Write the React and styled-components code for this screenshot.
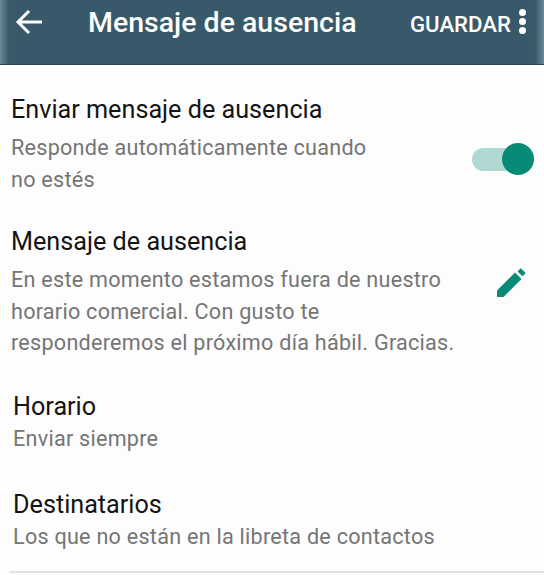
import React from 'react';
import styled, { createGlobalStyle } from 'styled-components';

const GlobalStyle = createGlobalStyle`
  html, body {
    margin: 0;
    padding: 0;
    background: #fff;
  }
  body {
    font-family: Roboto, "Liberation Sans", sans-serif;
  }
`;

const Page = styled.div`
  width: 544px;
  height: 575px;
  overflow: hidden;
  background: #fdfdfd;
  display: flex;
  flex-direction: column;
`;

const Toolbar = styled.div`
  height: 65px;
  flex-shrink: 0;
  box-sizing: border-box;
  background: linear-gradient(90deg, #6b8796 0, #38596a 9px, #38596a 535px, #6b8796 544px);
  border-bottom: 1px solid #2a4452;
  display: flex;
  align-items: flex-start;
  padding: 8px 18px 0 15px;
  color: #fff;
`;

const BackButton = styled.svg`
  width: 28px;
  height: 28px;
  flex-shrink: 0;
`;

const Title = styled.div`
  margin-left: 45px;
  font-size: 28.5px;
  font-weight: 500;
  line-height: 30px;
  flex: 1;
`;

const SaveLabel = styled.div`
  font-size: 22.2px;
  font-weight: 500;
  line-height: 30px;
  margin-top: 1px;
`;

const MoreDots = styled.div`
  display: flex;
  flex-direction: column;
  gap: 2px;
  margin-left: 8px;
  margin-top: 1px;
`;

const Dot = styled.span`
  width: 7px;
  height: 7px;
  border-radius: 50%;
  background: #fff;
`;

const Setting = styled.div`
  display: flex;
  align-items: center;
  justify-content: space-between;
  padding-left: ${(p) => p.$indent || 11}px;
  padding-right: ${(p) => p.$right || 11}px;
  margin-top: ${(p) => p.$top || 0}px;
`;

const SettingText = styled.div`
  display: flex;
  flex-direction: column;
`;

const Heading = styled.div`
  font-size: 25.2px;
  line-height: 30px;
  color: #141414;
`;

const Detail = styled.div`
  font-size: 21.6px;
  line-height: ${(p) => p.$lines || 32}px;
  letter-spacing: 0.25px;
  color: #757575;
  white-space: pre-line;
  margin-top: ${(p) => p.$gap || 1}px;
`;

const Switch = styled.div`
  position: relative;
  width: 62px;
  height: 32px;
  margin-top: 27px;
`;

const SwitchTrack = styled.div`
  position: absolute;
  left: 0;
  top: 5px;
  width: 50px;
  height: 23px;
  border-radius: 12px;
  background: #b0d9d4;
`;

const SwitchKnob = styled.div`
  position: absolute;
  right: 0;
  top: 0;
  width: 32px;
  height: 32px;
  border-radius: 50%;
  background: #078a76;
`;

const EditIcon = styled.svg`
  width: 50px;
  height: 50px;
  flex-shrink: 0;
  margin-bottom: 20px;
`;

const Divider = styled.div`
  height: 2px;
  margin: 18px 0 0 9px;
  background: #e4e4e4;
`;

const App = () => {
  return (
    <Page>
      <GlobalStyle />
      <Toolbar>
        <BackButton viewBox="0 0 28 28" fill="none" stroke="#fff" strokeWidth="3">
          <path d="M27 14H3M14 3L3 14l11 11" />
        </BackButton>
        <Title>Mensaje de ausencia</Title>
        <SaveLabel>GUARDAR</SaveLabel>
        <MoreDots>
          <Dot />
          <Dot />
          <Dot />
        </MoreDots>
      </Toolbar>

      <Setting $top={30} $right={10}>
        <SettingText>
          <Heading>Enviar mensaje de ausencia</Heading>
          <Detail $gap={7}>{'Responde automáticamente cuando\nno estés'}</Detail>
        </SettingText>
        <Switch>
          <SwitchTrack />
          <SwitchKnob />
        </Switch>
      </Setting>

      <Setting $top={31} $right={9}>
        <SettingText>
          <Heading>Mensaje de ausencia</Heading>
          <Detail $gap={7} $lines={31.5}>
            {'En este momento estamos fuera de nuestro\nhorario comercial. Con gusto te\nresponderemos el próximo día hábil. Gracias.'}
          </Detail>
        </SettingText>
        <EditIcon viewBox="0 0 50 50" fill="#078a76">
          <path d="M12 39v-6.5L30 14.5l6.5 6.5L18.5 39z" />
          <path d="M32.5 13.5l3.2-3.2 5 4.7-3 3.3z" />
        </EditIcon>
      </Setting>

      <Setting $top={33} $indent={13}>
        <SettingText>
          <Heading>Horario</Heading>
          <Detail>Enviar siempre</Detail>
        </SettingText>
      </Setting>

      <Setting $top={35} $indent={13}>
        <SettingText>
          <Heading>Destinatarios</Heading>
          <Detail>Los que no están en la libreta de contactos</Detail>
        </SettingText>
      </Setting>

      <Divider />
    </Page>
  );
};

export default App;
